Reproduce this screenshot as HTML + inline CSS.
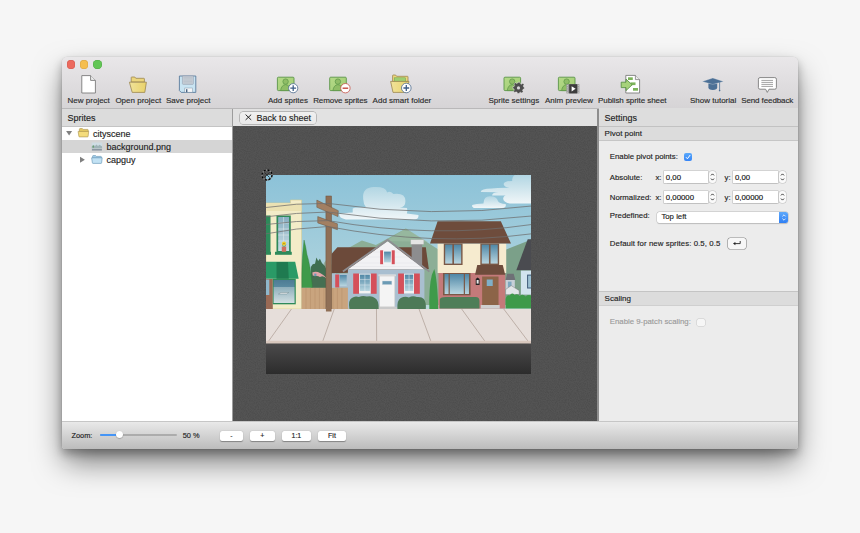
<!DOCTYPE html>
<html><head><meta charset="utf-8">
<style>
*{margin:0;padding:0;box-sizing:border-box}
html,body{width:860px;height:533px;overflow:hidden;background:#f6f6f6;font-family:"Liberation Sans",sans-serif;color:#222}
#win div{-webkit-text-stroke:0.14px currentColor}
.abs{position:absolute}
#win{position:absolute;left:62px;top:57px;width:736px;height:392px;border-radius:5px 5px 3px 3px;background:#e3e3e3;box-shadow:0 5px 10px rgba(0,0,0,0.28),0 15px 30px -2px rgba(0,0,0,0.5),0 0 0 0.5px rgba(0,0,0,0.07);overflow:hidden}
#toolbar{position:absolute;left:0;top:0;width:736px;height:52px;background:linear-gradient(#e9e7e9,#d6d4d6);border-bottom:1px solid #b9b8b9}
.dot{position:absolute;width:8.4px;height:8.4px;border-radius:50%;top:3px}
.tl{position:absolute;font-size:8px;color:#2b2b2b;white-space:nowrap;top:39px}
#lefthead{position:absolute;left:0;top:52px;width:170px;height:18px;background:#dcdcdc;border-bottom:1px solid #c4c4c4}
#tree{position:absolute;left:0;top:70px;width:169.5px;height:294px;background:#fff}
#div1{position:absolute;left:169.5px;top:52px;width:1.5px;height:312px;background:#9d9d9d}
#centhead{position:absolute;left:171px;top:52px;width:364px;height:17.4px;background:#e2e2e2}
#canvas{position:absolute;left:171px;top:69.4px;width:364px;height:294.6px;background:#545454}
#div2{position:absolute;left:535px;top:52px;width:2px;height:313px;background:#8e8e8e}
#right{position:absolute;left:537px;top:51.4px;width:199px;height:313.2px;background:#ececec}
#bottom{position:absolute;left:0;top:364px;width:736px;height:28px;background:linear-gradient(#e9e9e9,#bcbcbc);border-top:1px solid #c6c6c6}
.btn{position:absolute;height:10px;background:#fff;border-radius:2px;box-shadow:0 0.5px 1px rgba(0,0,0,0.35);font-size:7px;text-align:center;line-height:10px;color:#222}
.lbl{position:absolute;font-size:7.8px;white-space:nowrap;color:#222}
.inp{position:absolute;height:12px;background:#fff;box-shadow:0 0 0 0.5px #b9b9b9, 0 0.5px 1px rgba(0,0,0,0.15);font-size:7.8px;line-height:13.2px;padding-left:2px;color:#111}
.step{position:absolute;width:7px;height:12px;border-radius:3px;background:#fafafa;box-shadow:0 0 0 0.5px #bdbdbd}
</style></head><body>
<div id="win">
  <div id="toolbar">
    <div class="dot" style="left:4.8px;top:3.2px;background:#ec6a5e;box-shadow:inset 0 0 0 0.5px #d35a50"></div>
    <div class="dot" style="left:18.1px;top:3.2px;background:#f5be4f;box-shadow:inset 0 0 0 0.5px #d9a23e"></div>
    <div class="dot" style="left:31.4px;top:3.2px;background:#62c655;box-shadow:inset 0 0 0 0.5px #50a845"></div>
    <div class="tl" style="left:5.6px">New project</div>
    <div class="tl" style="left:53.4px">Open project</div>
    <div class="tl" style="left:104px">Save project</div>
    <div class="tl" style="left:206px">Add sprites</div>
    <div class="tl" style="left:251.2px;letter-spacing:-0.09px">Remove sprites</div>
    <div class="tl" style="left:310.6px">Add smart folder</div>
    <div class="tl" style="left:426.5px">Sprite settings</div>
    <div class="tl" style="left:483px">Anim preview</div>
    <div class="tl" style="left:536px;letter-spacing:-0.07px">Publish sprite sheet</div>
    <div class="tl" style="left:628px">Show tutorial</div>
    <div class="tl" style="left:679.2px;letter-spacing:-0.1px">Send feedback</div>
  </div>
  <div id="lefthead"><div class="abs" style="left:5.4px;top:4px;font-size:9px">Sprites</div></div>
  <div id="tree">
    <div class="abs" style="left:0;top:13.3px;width:169.5px;height:12.6px;background:#d5d5d5"></div>
    <svg class="abs" style="left:0;top:0" width="170" height="50" viewBox="0 0 170 50">
      <path d="M4.1 3.9 H10.1 L7.1 8.4 Z" fill="#808080"/>
      <path d="M17.4 5 V2.2 Q17.4 1.6 18 1.6 H20.4 L21.2 2.4 H25.6 Q26.2 2.4 26.2 3 V5 Z" fill="#e6ca62" stroke="#a8914e" stroke-width="0.6"/>
      <path d="M16.1 4.4 H26.7 L26.1 9.4 Q26 9.9 25.5 9.9 H17.5 Q17 9.9 16.9 9.4 Z" fill="#f4dc7c" stroke="#a8914e" stroke-width="0.6"/>
      <rect x="29.7" y="15.5" width="10.4" height="6" fill="#cfdde4"/>
      <path d="M29.7 19.6 L31.5 18 L33 19 L34.5 17.4 L36 19 L37.5 17.8 L40.1 19.4 V21.5 H29.7 Z" fill="#9fb4b8"/>
      <rect x="30.6" y="18.6" width="1.4" height="2" fill="#6aa070"/>
      <rect x="29.9" y="22.3" width="10" height="1.1" fill="#6c7c8c"/>
      <path d="M18 29.8 V35.8 L22.9 32.8 Z" fill="#808080"/>
      <path d="M30.6 31.2 V29.2 Q30.6 28.6 31.2 28.6 H33.6 L34.4 29.4 H38.8 Q39.4 29.4 39.4 30 V31.2 Z" fill="#a6d0ea" stroke="#5f90b2" stroke-width="0.6"/>
      <path d="M29.6 30.8 H40.2 L39.6 35.9 Q39.5 36.4 39 36.4 H31 Q30.5 36.4 30.4 35.9 Z" fill="#c2e2f4" stroke="#5f90b2" stroke-width="0.6"/>
    </svg>
    <div class="abs" style="left:31px;top:1.6px;font-size:9px;color:#1e1e1e">cityscene</div>
    <div class="abs" style="left:44.5px;top:14.6px;font-size:9px;color:#1e1e1e">background.png</div>
    <div class="abs" style="left:44.5px;top:28px;font-size:9px;color:#1e1e1e">capguy</div>
  </div>
  <div id="div1"></div>
  <div id="centhead">
    <div class="abs" style="left:7px;top:2.8px;width:75.5px;height:11.8px;border-radius:3.5px;background:linear-gradient(#f0f0f0,#e9e9e9);box-shadow:0 0 0 0.7px #a6a6a6"></div>
    <svg class="abs" style="left:12.3px;top:5.4px" width="7" height="7" viewBox="0 0 7 7"><path d="M0.6 0.6 L6.2 5.9 M6.2 0.6 L0.6 5.9" stroke="#111" stroke-width="0.9"/></svg>
    <div class="abs" style="left:23.5px;top:4px;font-size:9px;color:#1e1e1e">Back to sheet</div>
  </div>
  <div id="canvas"><svg width="364" height="295" style="position:absolute;left:0;top:0"><filter id="nz" x="0" y="0" width="100%" height="100%"><feTurbulence type="fractalNoise" baseFrequency="0.9" numOctaves="2" seed="3"/><feColorMatrix type="matrix" values="0 0 0 0 0  0 0 0 0 0  0 0 0 0 0  0 0 0 -1.6 1.05"/></filter><rect width="364" height="295" fill="#000" filter="url(#nz)" opacity="0.12"/></svg></div>
  <div id="div2"></div>
  <div id="right">
    <div class="abs" style="left:0;top:0;width:199px;height:19px;background:#dddddd;border-bottom:1px solid #c2c2c2"></div>
    <div class="abs" style="left:5.6px;top:4.6px;font-size:9px;color:#1e1e1e">Settings</div>
    <div class="abs" style="left:0;top:19px;width:199px;height:14px;background:#dcdcdc;border-bottom:1px solid #c6c6c6"></div>
    <div class="abs" style="left:5.6px;top:21px;font-size:8px;color:#222">Pivot point</div>
    <div class="lbl" style="left:10.8px;top:43.4px">Enable pivot points:</div>
    <div class="abs" style="left:85px;top:44.2px;width:8px;height:8px;border-radius:2px;background:linear-gradient(#5aa9fb,#3584f6)"></div>
    <svg class="abs" style="left:85px;top:44.2px" width="8" height="8" viewBox="0 0 8 8"><path d="M2 4.2 L3.4 5.8 L6.2 2" fill="none" stroke="#fff" stroke-width="1"/></svg>
    <div class="lbl" style="left:10.8px;top:64.3px">Absolute:</div>
    <div class="lbl" style="left:56.4px;top:64.3px">x:</div>
    <div class="inp" style="left:64.8px;top:62.8px;width:44px">0,00</div>
    <div class="step" style="left:110.4px;top:62.8px"><svg width="7" height="12" viewBox="0 0 7 12" style="position:absolute;left:0;top:0"><path d="M2 4.4 L3.5 2.9 L5 4.4 M2 7.6 L3.5 9.1 L5 7.6" fill="none" stroke="#333" stroke-width="1"/></svg></div>
    <div class="lbl" style="left:125.6px;top:64.3px">y:</div>
    <div class="inp" style="left:134px;top:62.8px;width:44.6px">0,00</div>
    <div class="step" style="left:180.2px;top:62.8px"><svg width="7" height="12" viewBox="0 0 7 12" style="position:absolute;left:0;top:0"><path d="M2 4.4 L3.5 2.9 L5 4.4 M2 7.6 L3.5 9.1 L5 7.6" fill="none" stroke="#333" stroke-width="1"/></svg></div>
    <div class="lbl" style="left:10.8px;top:84.3px">Normalized:</div>
    <div class="lbl" style="left:56.4px;top:84.3px">x:</div>
    <div class="inp" style="left:64.8px;top:82.8px;width:44px">0,00000</div>
    <div class="step" style="left:110.4px;top:82.8px"><svg width="7" height="12" viewBox="0 0 7 12" style="position:absolute;left:0;top:0"><path d="M2 4.4 L3.5 2.9 L5 4.4 M2 7.6 L3.5 9.1 L5 7.6" fill="none" stroke="#333" stroke-width="1"/></svg></div>
    <div class="lbl" style="left:125.6px;top:84.3px">y:</div>
    <div class="inp" style="left:134px;top:82.8px;width:44.6px">0,00000</div>
    <div class="step" style="left:180.2px;top:82.8px"><svg width="7" height="12" viewBox="0 0 7 12" style="position:absolute;left:0;top:0"><path d="M2 4.4 L3.5 2.9 L5 4.4 M2 7.6 L3.5 9.1 L5 7.6" fill="none" stroke="#333" stroke-width="1"/></svg></div>
    <div class="lbl" style="left:10.8px;top:102.6px">Predefined:</div>
    <div class="abs" style="left:57.6px;top:103.6px;width:131.8px;height:11px;border-radius:2.5px;background:#fff;box-shadow:0 0 0 0.5px #c0c0c0,0 0.5px 1px rgba(0,0,0,0.2)"></div>
    <div class="abs" style="left:179.6px;top:103.6px;width:9.8px;height:11px;border-radius:0 2.5px 2.5px 0;background:linear-gradient(#5ea9fb,#2f7ff4)"></div>
    <svg class="abs" style="left:181.5px;top:104.6px" width="6" height="9" viewBox="0 0 6 9"><path d="M1.4 3.4 L3 1.8 L4.6 3.4 M1.4 5.6 L3 7.2 L4.6 5.6" fill="none" stroke="#fff" stroke-width="0.8"/></svg>
    <div class="lbl" style="left:62.4px;top:103.9px">Top left</div>
    <div class="lbl" style="left:10.8px;top:130.6px;letter-spacing:0.08px">Default for new sprites: 0.5, 0.5</div>
    <div class="abs" style="left:128.8px;top:130px;width:17.8px;height:10.2px;border-radius:2.5px;background:#f7f7f7;box-shadow:0 0 0 0.6px #8a8a8a"></div>
    <svg class="abs" style="left:133px;top:131.8px" width="10" height="7" viewBox="0 0 10 7"><path d="M8.2 1 V3.6 H2.4" fill="none" stroke="#222" stroke-width="0.9"/><path d="M1 3.6 L3.4 2 V5.2 Z" fill="#222"/></svg>
    <div class="abs" style="left:0;top:183px;width:199px;height:15px;background:#dcdcdc;border-top:1px solid #c4c4c4;border-bottom:1px solid #cfcfcf"></div>
    <div class="abs" style="left:5.6px;top:186px;font-size:8px;color:#222">Scaling</div>
    <div class="lbl" style="left:10.8px;top:208.4px;color:#9a9a9a">Enable 9-patch scaling:</div>
    <div class="abs" style="left:98.4px;top:210.4px;width:7.6px;height:7.6px;border-radius:1.5px;background:#f6f6f6;box-shadow:0 0 0 0.5px #c8c8c8"></div>
  </div>
  <div id="bottom">
    <div class="lbl" style="left:9.4px;top:9px;font-size:7.4px">Zoom:</div>
    <div class="abs" style="left:37.5px;top:12px;width:77px;height:1.8px;background:#acacac;border-radius:1px"></div>
    <div class="abs" style="left:37.5px;top:12px;width:20px;height:1.8px;background:#4595f6;border-radius:1px"></div>
    <div class="abs" style="left:53.6px;top:8.6px;width:7.4px;height:7.4px;background:#fff;border-radius:50%;box-shadow:0 0.5px 1px rgba(0,0,0,0.4)"></div>
    <div class="lbl" style="left:120.7px;top:9px;font-size:7.4px">50 %</div>
    <div class="btn" style="left:157.6px;top:9.4px;width:23.5px">-</div>
    <div class="btn" style="left:187.8px;top:9.4px;width:25.2px">+</div>
    <div class="btn" style="left:220px;top:9.4px;width:28.8px">1:1</div>
    <div class="btn" style="left:255.6px;top:9.4px;width:28.8px">Fit</div>
  </div>
</div>

<svg class="abs" style="left:266.3px;top:175px" width="265.2" height="199" viewBox="0 0 265.5 199" preserveAspectRatio="none">
 <defs>
  <linearGradient id="sky" x1="0" y1="0" x2="0" y2="1"><stop offset="0" stop-color="#8cc2d8"/><stop offset="0.6" stop-color="#a6cfdc"/><stop offset="1" stop-color="#bcd9dc"/></linearGradient>
  <linearGradient id="road" x1="0" y1="0" x2="0" y2="1"><stop offset="0" stop-color="#4b4a4b"/><stop offset="1" stop-color="#2c2c2c"/></linearGradient>
  <linearGradient id="glass" x1="0" y1="0" x2="0" y2="1"><stop offset="0" stop-color="#4f87a6"/><stop offset="1" stop-color="#b9d6e0"/></linearGradient>
  <linearGradient id="glass2" x1="0" y1="0" x2="0" y2="1"><stop offset="0" stop-color="#87aec2"/><stop offset="1" stop-color="#c8dce4"/></linearGradient>
  <linearGradient id="glass3" x1="0" y1="0" x2="0" y2="1"><stop offset="0" stop-color="#4d7c94"/><stop offset="0.3" stop-color="#5a8aa0"/><stop offset="0.32" stop-color="#8fb0bc"/><stop offset="1" stop-color="#d2dfe2"/></linearGradient>
  <linearGradient id="cloud" x1="0" y1="0" x2="0" y2="1"><stop offset="0" stop-color="#b2d6e3"/><stop offset="1" stop-color="#f0f6f8"/></linearGradient>
 </defs>
 <rect x="0" y="0" width="265.5" height="135" fill="url(#sky)"/>
 <!-- clouds -->
 <g fill="url(#cloud)">
  <path d="M97.3 24 Q96 12.5 108 12.1 Q120 11.6 121.3 17.5 Q124 15.5 127.6 19 Q139.6 17.5 139.6 26 Q139.6 32 134 32.5 L141.2 33 Q142 37 141 38.5 L152.7 40 Q153 44.5 148 44.5 H80 Q73 43 73.2 39 Q78 38 86.8 37.5 L86.8 33.5 Q90 32 100 32 Q97.5 29 97.3 24 Z"/>
  <path d="M249 0 H265.5 V28.5 H244 Q237 27 237.5 23 Q238 20.5 240 20.4 H226.5 Q226 17.5 233 17.2 L215 17 Q214.8 14 226 13.6 Q232 12.5 244 12.7 Q238 12 237.9 9 Q238.5 5.9 246.5 5.9 Q246 2 249 0 Z"/>
  <path d="M217.7 28.5 Q218 21.2 224 21.2 Q231 21 232.2 26 Q233.5 28.5 240 29 Q241 32.9 236 32.9 H208 Q205.5 31.5 206.4 30 Q210 28.9 217.7 28.5 Z"/>
 </g>
 <!-- mountains -->
 <path d="M70 80 L96 65.5 L110 70 L140 53.5 L178 78 L178 130 L70 130 Z" fill="#8cae96"/>
 <path d="M120 66 L140 53.5 L162 67 Z" fill="#9dbca4" opacity="0.6"/>
 <path d="M238 130 V75.5 L262 66 L266 64 V130 Z" fill="#7ba089"/>
 <!-- left building -->
 <path d="M0 28 H24.5 V25 H35.6 V134 H0 Z" fill="#f3ecc8" stroke="#d9cc8e" stroke-width="0.6"/>
 <rect x="0" y="28.5" width="35.3" height="7.5" fill="#ebe1b2"/>
 <rect x="10.5" y="40.5" width="14.3" height="37" fill="#2e8a5a"/>
 <rect x="12.2" y="42" width="10.9" height="34" fill="url(#glass2)"/>
 <path d="M17.6 42 V76 M12.2 48 H23 M12.2 54 H23 M12.2 60 H23 M12.2 66 H23" stroke="#e8eef0" stroke-width="0.5"/>
 <rect x="9" y="76.8" width="16.8" height="3" fill="#2e8a5a"/>
 <rect x="15.8" y="71.6" width="4.4" height="5.2" fill="#d07060"/>
 <path d="M17.4 71.8 L16.4 69 M18.6 71.8 L19.8 69.4" stroke="#3a8a3a" stroke-width="0.7"/><circle cx="18" cy="68.6" r="2" fill="#f2cf22"/><circle cx="18" cy="68.6" r="0.7" fill="#9a6a20"/>
 <rect x="0" y="40.5" width="4.5" height="37" fill="#2e8a5a"/>
 <rect x="0" y="76.8" width="5" height="3" fill="#2e8a5a"/>
 <path d="M0.8 86.8 H29.2 L32.7 103.8 H0 V86.8 Z" fill="#2a9a66"/>
 <path d="M10.5 87 H22 L22.8 103.8 H10.5 Z" fill="#1f7a50"/>
 <rect x="0" y="104" width="6.8" height="30" fill="#9a6a55"/><rect x="0" y="104.6" width="3.3" height="15.4" fill="#8fb8cc"/>
 <rect x="6.8" y="103.8" width="23" height="25.5" fill="#2e8a5a"/>
 <rect x="7.6" y="105" width="21" height="23" fill="url(#glass3)"/><path d="M12.5 119 L15 117.5 H22.8 L20.6 119 Z" fill="#e0e6e8" stroke="#4d6a70" stroke-width="0.3"/>
 <!-- trees behind -->
 <path d="M56 100 L58 88 L61 84 L66 90 V112.8 H56 Z" fill="#93ae9c"/>
 <path d="M44.9 112.8 V92 Q47 88 49 89 L50.5 82.5 L52.2 86 L54 83.7 L56 88 Q59 90 60.7 95 V112.8 Z" fill="#3f6e50"/>
 <path d="M46.4 97.5 Q52 94.5 60.2 102.5 L59.6 105 Q53 101 46.8 100.5 Z" fill="#e3a3a8"/>
 <rect x="48.3" y="98.6" width="2.2" height="2.8" fill="#6d9ab8"/>
 <path d="M46 112.8 V103 Q50 99.5 54 102 Q58 100 60.7 104 V112.8 Z" fill="#456f52"/>
 <path d="M35.9 112.8 Q35.6 90 37 76.3 L38.1 65.1 Q40 72 41 79.6 Q44.5 90 46.6 112.8 Z" fill="#3e9a4a" stroke="#2f7a3a" stroke-width="0.4"/>
 <!-- left wing of house + brown roof -->
 <path d="M71.5 72.3 H160 L163 94 L65.5 98.5 V79 Z" fill="#6c4a3a"/>
 <rect x="65.5" y="98.5" width="17" height="14.3" fill="#a9bfd0"/>
 <rect x="69.3" y="99.5" width="4" height="13" fill="#d5505a"/>
 <rect x="73.8" y="100" width="7" height="11" fill="url(#glass)"/>
 <!-- fence -->
 <rect x="35.6" y="112.8" width="47" height="21.2" fill="#c9a47e"/>
 <path d="M40 113 V134 M44.5 113 V134 M49 113 V134 M53.5 113 V134 M58 113 V134 M67 113 V134 M71.5 113 V134 M76 113 V134" stroke="#b48e6a" stroke-width="0.5"/>
 <!-- main house body -->
 <rect x="145.8" y="69" width="10.5" height="22" fill="#8d8d8f"/>
 <rect x="145" y="64.8" width="13" height="4.4" fill="#e4e4e4" stroke="#b0b0b0" stroke-width="0.4"/>
 <rect x="82" y="94.3" width="76.6" height="39" fill="#a9bfd0"/>
 <path d="M82 94.3 L121.8 66.2 L158.6 94.3 Z" fill="#f2f2f4"/>
 <path d="M90 88 H150 M84 91.5 H155 M98 82 H145 M106 77 H137" stroke="#dedee2" stroke-width="0.4"/>
 <path d="M77 96.6 L121.8 64.9 L163.6 96.6" fill="none" stroke="#8e8e92" stroke-width="1.8" stroke-linejoin="miter"/>
 <rect x="114.3" y="75.3" width="3" height="13.9" fill="#d5505a"/>
 <rect x="117.4" y="75.8" width="8.4" height="13" fill="#f4f4f4"/>
 <rect x="118.2" y="76.6" width="6.8" height="10.8" fill="url(#glass)"/>
 <rect x="125.9" y="75.3" width="3" height="13.9" fill="#d5505a"/>
 <rect x="87.3" y="98.5" width="5.8" height="20.3" fill="#d5505a"/>
 <rect x="93.2" y="98.8" width="11.6" height="19.6" fill="#f2f2f2"/>
 <rect x="94" y="99.6" width="10" height="16.4" fill="url(#glass)"/>
 <path d="M99 99.6 V116 M94 104.6 H104 M94 110 H104" stroke="#e8eef2" stroke-width="0.5"/>
 <rect x="105" y="98.5" width="5.8" height="20.3" fill="#d5505a"/>
 <rect x="132.3" y="98.5" width="5.8" height="20.3" fill="#d5505a"/>
 <rect x="138.2" y="98.8" width="10" height="19.6" fill="#f2f2f2"/>
 <rect x="139" y="99.6" width="8.4" height="16.4" fill="url(#glass)"/>
 <path d="M143.2 99.6 V116 M139 104.6 H147.4 M139 110 H147.4" stroke="#e8eef2" stroke-width="0.5"/>
 <rect x="148.2" y="98.5" width="5.8" height="20.3" fill="#d5505a"/>
 <rect x="112.6" y="99.4" width="17.4" height="1.8" fill="#e0e0e0"/>
 <rect x="113.6" y="101" width="15.4" height="31" fill="#f4f4f4" stroke="#c8c8c8" stroke-width="0.6"/>
 <rect x="116.4" y="106" width="9.6" height="3.6" fill="#6a9ab4" stroke="#cfd8de" stroke-width="0.4"/>
 <rect x="112" y="131.8" width="19" height="2.2" fill="#c9c9c9"/>
 <path d="M83.5 134 Q82 125 86 123 Q89 120.5 93 122 Q97 120 101 121.6 Q106 120.5 109 123 Q113 125 112.8 134 Z" fill="#4d7a57"/>
 <path d="M131.6 134 Q131 125 135 123 Q139 121 143 122.4 Q147 120.5 151 122 Q156 121.5 158 124 Q160.5 127 160 134 Z" fill="#4d7a57"/>
 <!-- thin trees right of main house -->
 <path d="M163.5 134 Q163 112 166 100 L168.5 94 Q171.5 104 172.5 134 Z" fill="#3f9a4a"/>
 <!-- right house -->
 <rect x="171.8" y="68.5" width="68.7" height="29.5" fill="#f6ebcf"/>
 <rect x="172.7" y="98" width="66.9" height="35.6" fill="#c47a7a"/>
 <path d="M171.8 46.2 H235.1 L245.3 68.5 H164.2 Z" fill="#6e4c3c"/>
 <rect x="178" y="68.5" width="18.8" height="21.5" fill="#7a5846"/>
 <rect x="179.4" y="69.6" width="7.2" height="19" fill="url(#glass)"/>
 <rect x="188.2" y="69.6" width="7.2" height="19" fill="url(#glass)"/>
 <rect x="214.6" y="68.5" width="18.8" height="21.5" fill="#7a5846"/>
 <rect x="216" y="69.6" width="7.2" height="19" fill="url(#glass)"/>
 <rect x="224.8" y="69.6" width="7.2" height="19" fill="url(#glass)"/>
 <path d="M211.5 90 H237 L239.5 99.7 H209.3 Z" fill="#6e4c3c"/>
 <rect x="177.2" y="98" width="27.6" height="22.3" fill="#7a5846"/>
 <rect x="178.8" y="99" width="4" height="20" fill="url(#glass)"/>
 <rect x="184" y="99" width="14" height="20" fill="url(#glass)"/>
 <rect x="199.2" y="99" width="4" height="20" fill="url(#glass)"/>
 <rect x="216.4" y="101.5" width="16.4" height="28.5" fill="#8c6448"/>
 <rect x="221" y="104.5" width="6" height="6.5" fill="#7fb0c8"/>
 <path d="M210 104 L211.9 102.6 L213.8 104 V110 H210 Z" fill="#222"/><rect x="210.9" y="105" width="2" height="3.6" fill="#e8e8e8"/>
 <rect x="215" y="130" width="19" height="3.6" fill="#d0d0d0"/>
 <path d="M174 133.6 V124 Q175 122 180 122 H210 Q213.7 122 213.7 126 V133.6 Z" fill="#4e7e58"/>
 <!-- far right houses -->
 <rect x="239.9" y="105" width="9.2" height="14.6" fill="#c8d0d8"/>
 <path d="M239.9 105 L241.5 98.8 H248 L249.6 105 Z" fill="#6e7076"/>
 <rect x="242.2" y="106.6" width="3.6" height="5.6" fill="#7fa8c0"/>
 <path d="M239.9 119.6 V114.5 L245.5 110.6 L253.5 115.6 V119.6 Z" fill="#e2e6e8" stroke="#555" stroke-width="0.35"/>
 <path d="M250.6 95.3 L262 64.2 H266 V95.3 Z" fill="#4a4b50"/>
 <rect x="255.2" y="95.6" width="10.8" height="24" fill="#d2e4ee"/>
 <rect x="261.4" y="99.6" width="4.6" height="13.9" fill="#3d5a78"/>
 <rect x="262.4" y="100.6" width="3.6" height="11.9" fill="#9cc0d2"/>
 <path d="M239.9 133.6 V124 Q241 119.6 244 120.5 Q246 117 249 120 Q252 118 254 121 Q257 118.5 260 121.5 Q263 119 266 121 V133.6 Z" fill="#3e9a4a"/>
 <!-- utility pole -->
 <rect x="60" y="21" width="5.6" height="115.5" fill="#8f6f56" stroke="#6c523e" stroke-width="0.5"/>
 <path d="M50.9 25.1 L72.4 35.7 L72 41.6 L50.9 32.3 Z" fill="#a27f62" stroke="#6c523e" stroke-width="0.5"/>
 <path d="M51.8 41.6 L71.5 48.8 L71.5 54.7 L51.8 47.9 Z" fill="#a27f62" stroke="#6c523e" stroke-width="0.5"/>
 <!-- wires -->
 <g fill="none" stroke="#6e6e6e" stroke-width="0.75">
  <path d="M0 32.5 Q30 28 62 28.4 Q167 43.5 266 31"/>
  <path d="M0 41.8 Q30 37.5 62 37 Q167 52.8 266 41"/>
  <path d="M0 49.5 Q30 45.5 62 45.6 Q167 64 266 49.5"/>
  <path d="M0 58.8 Q30 53 62 51.5 Q167 71.8 266 58.8"/>
 </g>
 <!-- sidewalk -->
 <rect x="0" y="134" width="265.5" height="32.6" fill="#e6deda"/>
 <g stroke="#9c8a7e" stroke-width="0.55" fill="none">
  <path d="M25.5 134 L2.7 166"/>
  <path d="M68.3 134 L56.9 166"/>
  <path d="M110.6 134 L110.8 166"/>
  <path d="M153.2 134 L165 166"/>
  <path d="M195.9 134 L219 166"/>
  <path d="M238 134 L266 171"/>
 </g>
 <rect x="60" y="132" width="5.6" height="4.5" fill="#8f6f56"/>
 <rect x="0" y="165.8" width="265.5" height="3" fill="#d9c8be"/>
 <rect x="0" y="168.6" width="265.5" height="30.4" fill="url(#road)"/>
</svg>
<svg class="abs" style="left:260.8px;top:169.1px" width="12" height="12" viewBox="0 0 12 12">
 <circle cx="6" cy="6" r="5" fill="none" stroke="#8a8a8a" stroke-width="1.3"/>
 <circle cx="6" cy="6" r="5" fill="none" stroke="#000" stroke-width="1.3" stroke-dasharray="2.2 1.7"/>
 <path d="M3.4 3.4 L8.6 8.6 M8.6 3.4 L3.4 8.6" stroke="#2a2a2a" stroke-width="0.8"/>
</svg>

<svg id="icons" class="abs" style="left:0;top:0" width="860" height="533" viewBox="0 0 860 533">
 <defs>
  <linearGradient id="gfold" x1="0" x2="1"><stop offset="0" stop-color="#f0e29a"/><stop offset="1" stop-color="#e9d26a"/></linearGradient>
  <linearGradient id="ggreen" x1="0" x2="1" y1="0" y2="1"><stop offset="0" stop-color="#b4da88"/><stop offset="1" stop-color="#a2cc74"/></linearGradient>
 </defs>
 <!-- New project -->
 <path d="M81.8 75.6 H90.6 L95.4 80.4 V93 H81.8 Z" fill="#fff" stroke="#7a7a7a" stroke-width="0.9"/>
 <path d="M90.6 75.6 V80.4 H95.4" fill="#eee" stroke="#7a7a7a" stroke-width="0.9"/>
 <!-- Open project folder -->
 <path d="M131.2 82 V77.6 Q131.2 77 131.8 77 H134.8 L135.8 78.3 H143.8 Q144.4 78.3 144.4 78.9 V82 Z" fill="#ecd67c" stroke="#9c8650" stroke-width="0.8"/>
 <path d="M129.4 82.2 H146.4 L144.8 92.4 H132.2 Z" fill="url(#gfold)" stroke="#9c8650" stroke-width="0.8" stroke-linejoin="round"/>
 <!-- Save project floppy -->
 <path d="M179.4 76 H195.8 V92.4 H181.2 L179.4 90.6 Z" fill="#c9e4f2" stroke="#5b7c9c" stroke-width="0.9"/>
 <path d="M182.4 76 V83.6 Q182.4 84.4 183.2 84.4 H192.6 Q193.4 84.4 193.4 83.6 V76 Z" fill="#cad0d8" stroke="#8a98a8" stroke-width="0.5"/>
 <path d="M183.4 77.4 H192.4 M183.4 78.8 H192.4 M183.4 80.2 H192.4 M183.4 81.6 H192.4 M183.4 83 H192.4" stroke="#aab2bc" stroke-width="0.45"/>
 <rect x="184.8" y="88" width="7.8" height="4.2" fill="#f4f6f8" stroke="#8094a8" stroke-width="0.5"/>
 <rect x="186" y="89.2" width="1.4" height="3" fill="#4a6482"/>
 <!-- Add sprites -->
 <g>
  <rect x="277.4" y="77.2" width="16.6" height="13.4" rx="1" fill="url(#ggreen)" stroke="#5a9548" stroke-width="0.9"/>
  <circle cx="285.6" cy="81.6" r="2.7" fill="#8fbd66" stroke="#5a9548" stroke-width="0.7"/>
  <path d="M280.6 90.6 Q281.4 85 285.6 84.6 Q289.8 85 290.6 90.6 Z" fill="#8fbd66" stroke="#5a9548" stroke-width="0.7"/>
 </g>
 <circle cx="293.2" cy="88.2" r="4.6" fill="#fff" stroke="#4d6b8e" stroke-width="0.8"/>
 <path d="M290.3 88.2 H296.1 M293.2 85.3 V91.1" stroke="#3f5f88" stroke-width="1.3"/>
 <!-- Remove sprites -->
 <g transform="translate(52.3 0)">
  <rect x="277.4" y="77.2" width="16.6" height="13.4" rx="1" fill="url(#ggreen)" stroke="#5a9548" stroke-width="0.9"/>
  <circle cx="285.6" cy="81.6" r="2.7" fill="#8fbd66" stroke="#5a9548" stroke-width="0.7"/>
  <path d="M280.6 90.6 Q281.4 85 285.6 84.6 Q289.8 85 290.6 90.6 Z" fill="#8fbd66" stroke="#5a9548" stroke-width="0.7"/>
 </g>
 <circle cx="345.4" cy="88.2" r="4.7" fill="#fff" stroke="#c65045" stroke-width="0.8"/>
 <path d="M342.6 88.2 H348.2" stroke="#c6483e" stroke-width="1.4"/>
 <!-- Add smart folder -->
 <path d="M392.6 81.6 V75.6 Q392.6 75 393.2 75 H395.6 L396.6 76.3 H407.4 Q408 76.3 408 76.9 V81.6 Z" fill="#ecd67c" stroke="#9c8650" stroke-width="0.8"/>
 <rect x="394.2" y="77.8" width="11.4" height="4.2" fill="#9fcf72" stroke="#6aa050" stroke-width="0.5"/>
 <path d="M390.6 81.4 H409 L406.6 92.4 H393 Z" fill="url(#gfold)" stroke="#9c8650" stroke-width="0.8" stroke-linejoin="round"/>
 <circle cx="406.3" cy="88" r="4.8" fill="#fff" stroke="#4d6b8e" stroke-width="0.8"/>
 <path d="M403.4 88 H409.2 M406.3 85.1 V90.9" stroke="#3f5f88" stroke-width="1.3"/>
 <!-- Sprite settings -->
 <g transform="translate(226.6 0)">
  <rect x="277.4" y="77.2" width="16.6" height="13.4" rx="1" fill="url(#ggreen)" stroke="#5a9548" stroke-width="0.9"/>
  <circle cx="285.6" cy="81.6" r="2.7" fill="#8fbd66" stroke="#5a9548" stroke-width="0.7"/>
  <path d="M280.6 90.6 Q281.4 85 285.6 84.6 Q289.8 85 290.6 90.6 Z" fill="#8fbd66" stroke="#5a9548" stroke-width="0.7"/>
 </g>
 <g transform="translate(519.1 87.4)">
  <path d="M-1.2 -6 H1.2 L1.5 -4.3 L2.9 -3.7 L4.3 -4.8 L5.9 -3.2 L4.8 -1.8 L5.4 -0.4 L6.1 -0.3 V1.9 L4.6 2.3 L4 3.7 L4.9 5.1 L3.2 6.7 L1.8 5.7 L0.5 6.2 L0.2 7.2 H-2 L-2.3 5.8 L-3.6 5.2 L-5 6.1 L-6.6 4.4 L-5.6 3.1 L-6.1 1.7 L-7.4 1.4 V-0.9 L-5.8 -1.2 L-5.2 -2.6 L-6.2 -4 L-4.5 -5.6 L-3.1 -4.6 L-1.6 -5.2 Z" fill="#4e4e4e" stroke="#f2f2f2" stroke-width="0.5" transform="scale(0.85)"/>
  <circle cx="-0.6" cy="0.5" r="1.6" fill="#d8d8d8"/>
 </g>
 <!-- Anim preview -->
 <g transform="translate(281 0)">
  <rect x="277.4" y="77.2" width="16.6" height="13.4" rx="1" fill="url(#ggreen)" stroke="#5a9548" stroke-width="0.9"/>
  <circle cx="285.6" cy="81.6" r="2.7" fill="#8fbd66" stroke="#5a9548" stroke-width="0.7"/>
  <path d="M280.6 90.6 Q281.4 85 285.6 84.6 Q289.8 85 290.6 90.6 Z" fill="#8fbd66" stroke="#5a9548" stroke-width="0.7"/>
 </g>
 <rect x="566.4" y="84.2" width="13" height="9.2" fill="#9a9a9a"/>
 <path d="M567.4 85 V93 M578.4 85 V93" stroke="#d0d0d0" stroke-width="0.9" stroke-dasharray="0.9 0.9"/>
 <rect x="569.2" y="84.2" width="8" height="9.2" fill="#3c3c3c"/>
 <path d="M571.6 86.2 L575.6 88.8 L571.6 91.4 Z" fill="#fff"/>
 <!-- Publish sprite sheet -->
 <path d="M625.8 75.4 H635.4 L639.6 79.6 V93 H625.8 Z" fill="#fff" stroke="#7e7e7e" stroke-width="0.9"/>
 <path d="M635.4 75.4 V79.6 H639.6" fill="#eee" stroke="#7e7e7e" stroke-width="0.8"/>
 <rect x="628" y="77.3" width="4.8" height="2.7" fill="#7cb35a"/>
 <rect x="630.6" y="82.4" width="4.9" height="2.7" fill="#7cb35a"/>
 <rect x="633" y="88" width="5" height="2.7" fill="#7cb35a"/>
 <path d="M621.2 82.2 H626 V79.2 L632.2 84.8 L626 90.6 V87.6 H621.2 Z" fill="#a6d27a" stroke="#4f8a3c" stroke-width="0.8" stroke-linejoin="round"/>
 <!-- Show tutorial -->
 <path d="M708.4 83.4 V87.6 Q708.4 90 712.8 90 Q717.2 90 717.2 87.6 V83.4 Z" fill="#4c7096"/>
 <path d="M702.2 81.5 L712.8 78 L723.6 81.5 L712.8 84.4 Z" fill="#4c7096" stroke="#e6e6e8" stroke-width="0.3"/>
 <path d="M719.6 82.2 V90.6" stroke="#4c7096" stroke-width="0.8"/>
 <circle cx="719.6" cy="90.6" r="0.8" fill="#4c7096"/>
 <!-- Send feedback -->
 <path d="M760 77.6 H774.8 Q776.4 77.6 776.4 79.2 V87.6 Q776.4 89.2 774.8 89.2 H769 L767.3 92.4 L765.6 89.2 H760 Q758.4 89.2 758.4 87.6 V79.2 Q758.4 77.6 760 77.6 Z" fill="#fff" stroke="#7c7c7c" stroke-width="0.9"/>
 <path d="M761.4 80.4 H773 M761.4 82.4 H773 M761.4 84.4 H773 M761.4 86.4 H773" stroke="#8a8a8a" stroke-width="0.8"/>
</svg>
</body></html>
